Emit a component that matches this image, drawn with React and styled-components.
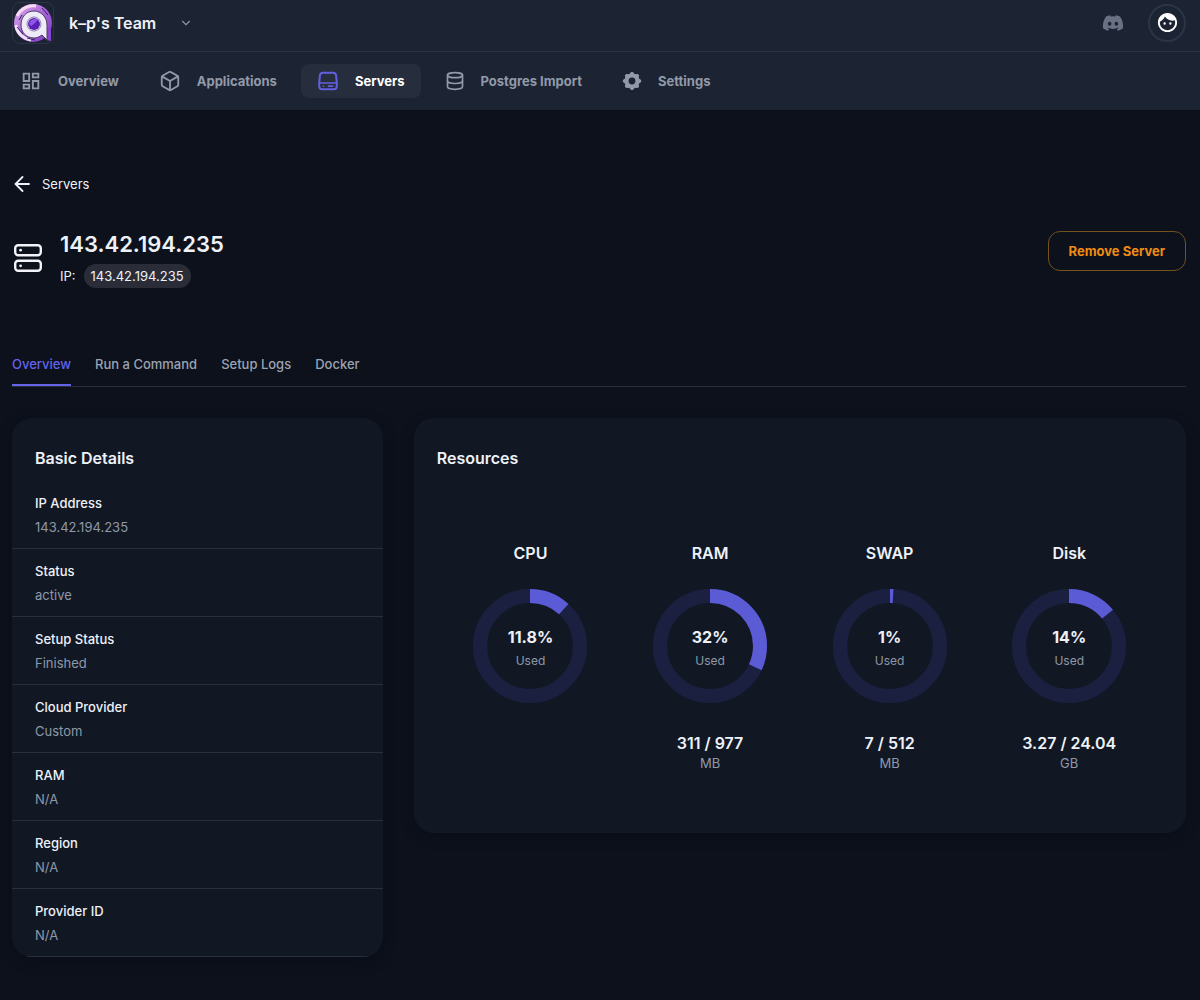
import React from "react";
import styled, { createGlobalStyle } from "styled-components";
import { FaDiscord } from "react-icons/fa";
import { MdOutlineDashboard, MdFace } from "react-icons/md";
import { FiBox, FiChevronDown, FiDatabase } from "react-icons/fi";

const details = [
  ["IP Address", "143.42.194.235"],
  ["Status", "active"],
  ["Setup Status", "Finished"],
  ["Cloud Provider", "Custom"],
  ["RAM", "N/A"],
  ["Region", "N/A"],
  ["Provider ID", "N/A"],
];

const resources = [
  { name: "CPU", percent: 11.8 },
  { name: "RAM", percent: 32, amount: "311 / 977", unit: "MB" },
  { name: "SWAP", percent: 1, amount: "7 / 512", unit: "MB" },
  { name: "Disk", percent: 14, amount: "3.27 / 24.04", unit: "GB" },
];

const tabs = ["Overview", "Run a Command", "Setup Logs", "Docker"];

export default function App() {
  return (
    <>
      <GlobalStyle />
      <Header>
        <TopBar>
          <TeamButton type="button">
            <LogoBox>
              <Logo />
            </LogoBox>
            <span>k–p's Team</span>
            <FiChevronDown size={14} />
          </TeamButton>
          <TopActions>
            <DiscordLink href="#discord" aria-label="Discord">
              <FaDiscord size={22} />
            </DiscordLink>
            <AvatarButton type="button" aria-label="Account">
              <MdFace size={23} />
            </AvatarButton>
          </TopActions>
        </TopBar>
        <Nav>
          <NavLink href="#overview">
            <MdOutlineDashboard size={22} />
            Overview
          </NavLink>
          <NavLink href="#applications">
            <FiBox size={22} />
            Applications
          </NavLink>
          <NavLink href="#servers" $active aria-current="page">
            <DriveIcon />
            Servers
          </NavLink>
          <NavLink href="#import">
            <FiDatabase size={20} />
            Postgres Import
          </NavLink>
          <NavLink href="#settings">
            <GearIcon />
            Settings
          </NavLink>
        </Nav>
      </Header>

      <Main>
        <BackLink href="#servers">
          <ArrowIcon />
          Servers
        </BackLink>

        <ServerHead>
          <ServerInfo>
            <ServerIcon />
            <div>
              <ServerName>143.42.194.235</ServerName>
              <IpLine>
                IP: <IpBadge>143.42.194.235</IpBadge>
              </IpLine>
            </div>
          </ServerInfo>
          <RemoveButton type="button">Remove Server</RemoveButton>
        </ServerHead>

        <Tabs>
          {tabs.map((tab, i) => (
            <Tab key={tab} type="button" $active={i === 0}>
              {tab}
            </Tab>
          ))}
        </Tabs>

        <Panels>
          <Card>
            <CardTitle>Basic Details</CardTitle>
            <DetailList>
              {details.map(([label, value]) => (
                <DetailRow key={label}>
                  <dt>{label}</dt>
                  <dd>{value}</dd>
                </DetailRow>
              ))}
            </DetailList>
          </Card>
          <Card>
            <CardTitle>Resources</CardTitle>
            <ResourceGrid>
              {resources.map((item) => (
                <Resource key={item.name}>
                  <ResourceName>{item.name}</ResourceName>
                  <Donut percent={item.percent} />
                  {item.amount && (
                    <>
                      <Amount>{item.amount}</Amount>
                      <Unit>{item.unit}</Unit>
                    </>
                  )}
                </Resource>
              ))}
            </ResourceGrid>
          </Card>
        </Panels>
      </Main>
    </>
  );
}

function Donut({ percent }) {
  return (
    <DonutBox>
      <svg width="114" height="114" viewBox="0 0 114 114" fill="none" strokeWidth="14" aria-hidden="true">
        <circle cx="57" cy="57" r="50" stroke="#1c2040" />
        <circle
          cx="57"
          cy="57"
          r="50"
          stroke="#5b5bd6"
          pathLength="100"
          strokeDasharray={`${percent} 100`}
          transform="rotate(-90 57 57)"
        />
      </svg>
      <DonutLabel>
        <strong>{percent}%</strong>
        <span>Used</span>
      </DonutLabel>
    </DonutBox>
  );
}

function Logo() {
  return (
    <svg width="40" height="40" viewBox="0 0 40 40" aria-hidden="true">
      <defs>
        <linearGradient id="ring" x1="0" y1="0" x2="1" y2="1">
          <stop offset="0" stopColor="#e3b5ee" />
          <stop offset="0.5" stopColor="#a865d8" />
          <stop offset="1" stopColor="#7a35c4" />
        </linearGradient>
      </defs>
      <circle cx="20" cy="20" r="19" fill="url(#ring)" />
      <path d="M30 27 38 24 38 38 33 37Z" fill="#8545cf" />
      <path d="M4 13C8 5 16 2 23 3" stroke="#f6d9f3" strokeWidth="3" fill="none" />
      <path d="M3 22C4 31 11 36 18 37" stroke="#f0e4f8" strokeWidth="3" fill="none" />
      <path d="M4 24 10 31M6 17 9 12M29 5 35 12M14 35 22 37" stroke="#3c1a66" strokeWidth="1" />
      <path
        d="M21 8C28 8 34 14 34 22V37L29 32C26 34 24 35 21 35 13 35 8 29 8 22 8 14 13 8 21 8Z"
        fill="#eeeaf8"
        stroke="#4a3a68"
        strokeWidth="1"
      />
      <circle cx="21" cy="21" r="7" fill="#f5f1fb" stroke="#8d80a8" strokeWidth="1" />
      <circle cx="21" cy="21" r="6" fill="#5a20b5" />
      <path d="M16 21C17 16 22 15 25 17 23 18 22 21 18 23Z" fill="#8f55e8" />
    </svg>
  );
}

function DriveIcon() {
  return (
    <svg width="22" height="22" viewBox="0 0 22 22" fill="none" stroke="#625fe0" strokeLinejoin="round" strokeLinecap="round" aria-hidden="true">
      <path d="M6 2.8H16Q18.9 2.8 19.1 5.5L19.8 13V16.2Q19.8 19.2 16.8 19.2H5.2Q2.2 19.2 2.2 16.2V13L2.9 5.5Q3.1 2.8 6 2.8Z" strokeWidth="2" />
      <path d="M2.6 13H19.4M6.4 16.1H6.6M11.5 16.1H15.6" strokeWidth="1.6" />
    </svg>
  );
}

function GearIcon() {
  return (
    <svg width="20" height="20" viewBox="0 0 20 20" fill="none" aria-hidden="true">
      <circle cx="10" cy="10" r="5.4" stroke="currentColor" strokeWidth="4" />
      {[0, 45, 90, 135, 180, 225, 270, 315].map((angle) => (
        <path key={angle} d="M7 3.6 9.1 0.9H10.9L13 3.6Z" fill="currentColor" transform={`rotate(${angle} 10 10)`} />
      ))}
    </svg>
  );
}

function ArrowIcon() {
  return (
    <svg width="16" height="16" viewBox="0 0 16 16" fill="none" stroke="currentColor" strokeWidth="1.8" strokeLinecap="round" aria-hidden="true">
      <path d="M8.5 1 1.5 8 8.5 15M1.5 8H15" />
    </svg>
  );
}

function ServerIcon() {
  return (
    <svg width="28" height="28" viewBox="0 0 28 28" fill="none" stroke="#f1f3f9" strokeWidth="2.4" aria-hidden="true">
      <rect x="1.2" y="1.2" width="25.6" height="10" rx="3" />
      <rect x="1.2" y="16.8" width="25.6" height="10" rx="3" />
      <circle cx="6.6" cy="6.2" r="1.4" fill="#f1f3f9" stroke="none" />
      <circle cx="6.6" cy="21.8" r="1.4" fill="#f1f3f9" stroke="none" />
    </svg>
  );
}

const GlobalStyle = createGlobalStyle`
  * {
    box-sizing: border-box;
  }
  body {
    margin: 0;
    background: #0c111c;
    color: #eef1f8;
    font-family: Inter, "Liberation Sans", sans-serif;
    font-size: 13px;
    line-height: 20px;
  }
  button {
    font: inherit;
    color: inherit;
    background: none;
    border: 0;
    padding: 0;
    cursor: pointer;
  }
  a {
    color: inherit;
    text-decoration: none;
  }
  h1, h2, h3, p, dl, dd {
    margin: 0;
  }
`;

const Header = styled.header`
  background: #1c2434;
`;

const TopBar = styled.div`
  display: flex;
  align-items: center;
  justify-content: space-between;
  height: 52px;
  padding: 0 14px 6px 12px;
  border-bottom: 1px solid #2a3242;
`;

const TeamButton = styled.button`
  display: flex;
  align-items: center;
  gap: 15px;
  font-size: 16px;
  font-weight: 600;

  > svg {
    margin-left: 8px;
    color: #8991a1;
  }
`;

const LogoBox = styled.span`
  display: flex;
  border: 1px solid #2c3546;
  border-radius: 8px;
`;

const TopActions = styled.div`
  display: flex;
  align-items: center;
  gap: 24px;
`;

const DiscordLink = styled.a`
  display: flex;
  color: #697182;
`;

const AvatarButton = styled.button`
  display: flex;
  align-items: center;
  justify-content: center;
  width: 38px;
  height: 38px;
  border: 2px solid #2b3548;
  border-radius: 50%;
  color: #fff;
`;

const Nav = styled.nav`
  display: flex;
  gap: 8px;
  padding: 12px 4px;
`;

const NavLink = styled.a`
  display: flex;
  align-items: center;
  gap: 16px;
  height: 34px;
  padding: 0 16px;
  border-radius: 8px;
  font-weight: 700;
  color: ${(props) => (props.$active ? "#fff" : "#9299a8")};
  background: ${(props) => (props.$active ? "#262e3e" : "transparent")};
`;

const Main = styled.main`
  padding: 64px 14px 44px 12px;
`;

const BackLink = styled.a`
  display: inline-flex;
  align-items: center;
  gap: 12px;
  padding-left: 2px;
`;

const ServerHead = styled.section`
  display: flex;
  align-items: flex-start;
  justify-content: space-between;
  padding-top: 31px;
`;

const ServerInfo = styled.div`
  display: flex;
  align-items: center;
  gap: 18px;
  padding-left: 2px;
`;

const ServerName = styled.h1`
  font-size: 22px;
  line-height: 32px;
  font-weight: 600;
`;

const IpLine = styled.p`
  display: flex;
  align-items: center;
  gap: 8px;
  margin-top: 4px;
`;

const IpBadge = styled.span`
  padding: 2px 7px;
  border-radius: 12px;
  background: #2a2d38;
`;

const RemoveButton = styled.button`
  height: 40px;
  margin-top: 3px;
  padding: 0 20px;
  border: 1px solid #74511f;
  border-radius: 12px;
  color: #f08c13;
  font-weight: 700;
`;

const Tabs = styled.div`
  display: flex;
  gap: 24px;
  margin-top: 66px;
  border-bottom: 1px solid #282e3a;
`;

const Tab = styled.button`
  padding-bottom: 10px;
  border-bottom: 2px solid ${(props) => (props.$active ? "#6464e8" : "transparent")};
  color: ${(props) => (props.$active ? "#6464e8" : "#9ba3b2")};
  font-weight: 500;
`;

const Panels = styled.div`
  display: grid;
  grid-template-columns: 12fr 25fr;
  align-items: start;
  gap: 31px;
  margin-top: 31px;
`;

const Card = styled.section`
  overflow: hidden;
  border-radius: 20px;
  background: #111824;
  box-shadow: 0 4px 12px #0b0e18;
`;

const CardTitle = styled.h2`
  padding: 28px 23px 0;
  font-size: 16px;
  line-height: 24px;
  font-weight: 600;
`;

const DetailList = styled.dl`
  padding-top: 11px;
`;

const DetailRow = styled.div`
  padding: 12px 23px 11px;
  border-bottom: 1px solid #28303d;
  line-height: 20px;

  dt {
    font-weight: 500;
  }
  dd {
    margin-top: 4px;
    color: #8f98a8;
  }
`;

const ResourceGrid = styled.div`
  display: grid;
  grid-template-columns: repeat(4, 1fr);
  padding: 71px 27px 62px;
`;

const Resource = styled.div`
  display: flex;
  flex-direction: column;
  align-items: center;
`;

const ResourceName = styled.h3`
  font-size: 16px;
  line-height: 24px;
  font-weight: 600;
`;

const DonutBox = styled.div`
  display: grid;
  place-items: center;
  margin: 24px 0 28px;

  > * {
    grid-area: 1 / 1;
  }
`;

const DonutLabel = styled.div`
  display: flex;
  flex-direction: column;
  align-items: center;
  gap: 2px;
  padding-top: 4px;

  strong {
    font-size: 16px;
    line-height: 24px;
    font-weight: 700;
  }
  span {
    font-size: 12px;
    color: #8f98a8;
  }
`;

const Amount = styled.p`
  font-size: 16px;
  line-height: 24px;
  font-weight: 600;
`;

const Unit = styled.p`
  line-height: 16px;
  color: #8f98a8;
`;
